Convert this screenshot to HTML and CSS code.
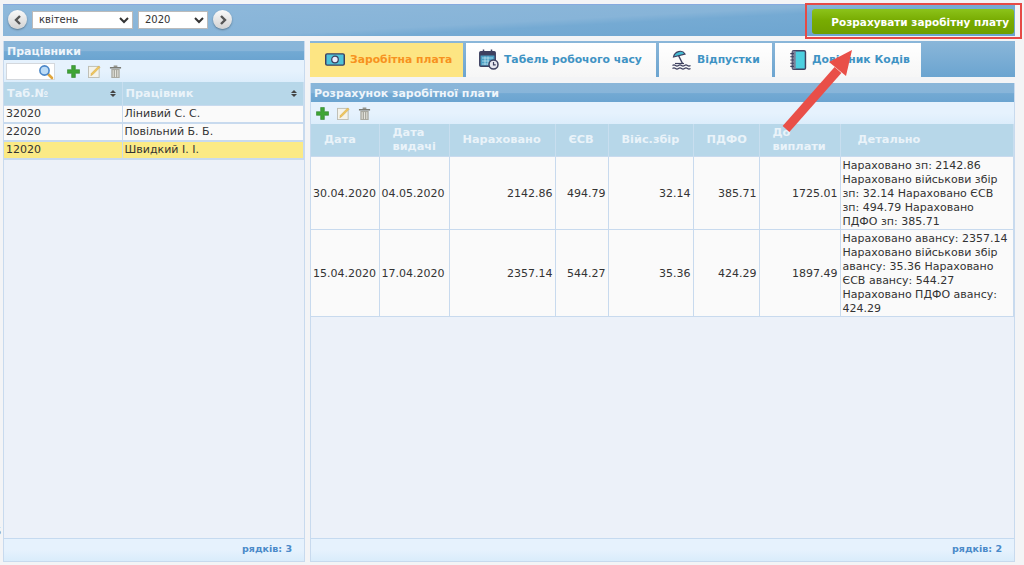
FILE: index.html
```html
<!DOCTYPE html>
<html>
<head>
  <meta charset="UTF-8">
  <title>Розрахунок заробітної плати</title>
  <link rel="stylesheet" href="styles.css">
</head>
<body>
  <div class="top-bar">
    <div class="period">
      <button class="round-button"><svg width="10" height="12" viewBox="0 0 10 12"><path d="M7 2 3 6l4 4" fill="none" stroke="#555" stroke-width="2.4"/></svg></button>
      <select class="month-select"><option>квітень</option></select>
      <select class="year-select"><option>2020</option></select>
      <button class="round-button"><svg width="10" height="12" viewBox="0 0 10 12"><path d="M3 2l4 4-4 4" fill="none" stroke="#555" stroke-width="2.4"/></svg></button>
    </div>
    <button class="calc-button">Розрахувати заробітну плату</button>
  </div>

  <div class="content">
    <div class="panel employees">
      <div class="panel-title">Працівники</div>
      <div class="toolbar">
        <div class="search-box">
          <svg width="16" height="16" viewBox="0 0 16 16"><path d="M9.500 9.500 14 14" stroke="#e0a63c" stroke-width="2.600" stroke-linecap="round"/><circle cx="6.500" cy="6.500" r="4.600" fill="#bcdcf7" stroke="#4a86c8" stroke-width="1.600"/></svg>
        </div>
        <svg class="tool-icon" width="13" height="13" viewBox="0 0 14 14"><path d="M5 .5h4v4.500h4.500v4H9v4.500H5V9H.5V5H5z" fill="#3fa535" stroke="#2a7d25" stroke-width=".6"/></svg>
        <svg class="tool-icon" width="13" height="13" viewBox="0 0 14 14"><rect x=".5" y="1.500" width="11.500" height="12" fill="#f4f3ea" stroke="#bdbdb2"/><path d="M3 11.500l.6-2.500L11.500 1l1.500 1.500L5 10.500z" fill="#efc65e" stroke="#c99a34" stroke-width=".4"/></svg>
        <svg class="tool-icon" width="13" height="13" viewBox="0 0 14 14"><path d="M1 2.200h12v1.600H1z" fill="#77776f"/><path d="M5 .5h4v1.700H5z" fill="#96968e"/><path d="M2.500 4.200h9V14h-9z" fill="#a9a9a0"/><path d="M4.500 5.500v7.500M7 5.500v7.500M9.500 5.500v7.500" stroke="#e8e8e2"/></svg>
      </div>
      <table class="grid staff-grid">
        <colgroup><col class="col-tab"><col></colgroup>
        <thead>
          <tr>
            <th><div class="sort-head">Таб.№<span class="sort-mark"></span></div></th>
            <th><div class="sort-head">Працівник<span class="sort-mark"></span></div></th>
          </tr>
        </thead>
        <tbody>
          <tr><td>32020</td><td>Лінивий С. С.</td></tr>
          <tr><td>22020</td><td>Повільний Б. Б.</td></tr>
          <tr class="selected"><td>12020</td><td>Швидкий І. І.</td></tr>
        </tbody>
      </table>
      <div class="panel-fill"></div>
      <div class="panel-footer">рядків: 3</div>
    </div>

    <div class="main">
      <div class="tabs">
        <div class="tab tab-pay active">
          <svg width="20" height="13" viewBox="0 0 22 14"><rect x=".8" y=".8" width="20.400" height="12.400" rx="1.500" fill="#4fc3d9" stroke="#3e4160" stroke-width="1.600"/><circle cx="11" cy="7" r="3.600" fill="#eef" stroke="#3e4160" stroke-width="1.400"/></svg>
          Заробітна плата
        </div>
        <div class="tab tab-time">
          <svg width="20" height="21" viewBox="0 0 20 21"><rect x=".8" y="2.800" width="15.400" height="14.400" rx="1" fill="#4a9fc4" stroke="#3e4160" stroke-width="1.500"/><path d="M1 3h15v3.500H1z" fill="#3e4160"/><path d="M4.500.5v4M12.500.5v4" stroke="#3e4160" stroke-width="1.500"/><path d="M3 9h11M3 12h7M3 15h6M6 7.500V16M9 7.500V16" stroke="#bfe3f0" stroke-width=".8"/><circle cx="14.500" cy="15.500" r="4.500" fill="#e8e8f0" stroke="#3e4160" stroke-width="1.500"/><path d="M14.500 13v2.800h2.200" fill="none" stroke="#3e4160" stroke-width="1.200"/></svg>
          Табель робочого часу
        </div>
        <div class="tab tab-leave">
          <svg width="20" height="21" viewBox="0 0 20 21"><path d="M1.500 8C2.500 2.500 10 0 13 5z" fill="#45bcd4" stroke="#3e4160" stroke-width="1.200"/><path d="M6.500 6.500 10.500 14.500" stroke="#3e4160" stroke-width="1.400"/><path d="M3 14.500h9" stroke="#3e4160" stroke-width="1.200"/><path d="M.5 16.500q1.500-1.200 3 0t3 0 3 0 3 0 3 0 3 0M.5 19.500q1.500-1.200 3 0t3 0 3 0 3 0 3 0 3 0" fill="none" stroke="#3e4160" stroke-width="1.200"/></svg>
          Відпустки
        </div>
        <div class="tab tab-codes">
          <svg width="18" height="20" viewBox="0 0 18 22"><rect x="2.800" y=".8" width="14.400" height="20.400" rx="1.500" fill="#4dcfe0" stroke="#3e4160" stroke-width="1.600"/><path d="M3 1h3.500v20H3z" fill="#7d8199"/><path d="M.5 4h4M.5 7.500h4M.5 11h4M.5 14.500h4M.5 18h4" stroke="#3e4160" stroke-width="1.200"/></svg>
          Довідник Кодів
        </div>
      </div>

      <div class="panel payroll">
        <div class="panel-title">Розрахунок заробітної плати</div>
        <div class="toolbar">
          <svg class="tool-icon" width="13" height="13" viewBox="0 0 14 14"><path d="M5 .5h4v4.500h4.500v4H9v4.500H5V9H.5V5H5z" fill="#3fa535" stroke="#2a7d25" stroke-width=".6"/></svg>
          <svg class="tool-icon" width="13" height="13" viewBox="0 0 14 14"><rect x=".5" y="1.500" width="11.500" height="12" fill="#f4f3ea" stroke="#bdbdb2"/><path d="M3 11.500l.6-2.500L11.500 1l1.500 1.500L5 10.500z" fill="#efc65e" stroke="#c99a34" stroke-width=".4"/></svg>
          <svg class="tool-icon" width="13" height="13" viewBox="0 0 14 14"><path d="M1 2.200h12v1.600H1z" fill="#77776f"/><path d="M5 .5h4v1.700H5z" fill="#96968e"/><path d="M2.500 4.200h9V14h-9z" fill="#a9a9a0"/><path d="M4.500 5.500v7.500M7 5.500v7.500M9.500 5.500v7.500" stroke="#e8e8e2"/></svg>
        </div>
        <table class="grid pay-grid">
          <colgroup>
            <col class="col-date-first"><col class="col-date"><col class="col-accrued"><col class="col-esv">
            <col class="col-mil"><col class="col-pdfo"><col class="col-net"><col>
          </colgroup>
          <thead>
            <tr>
              <th>Дата</th><th>Дата<br>видачі</th><th>Нараховано</th><th>ЄСВ</th>
              <th>Війс.збір</th><th>ПДФО</th><th>До<br>виплати</th><th class="th-detail">Детально</th>
            </tr>
          </thead>
          <tbody>
            <tr class="row-first">
              <td>30.04.2020</td><td>04.05.2020</td><td class="num">2142.86</td><td class="num">494.79</td>
              <td class="num">32.14</td><td class="num">385.71</td><td class="num">1725.01</td>
              <td>Нараховано зп: 2142.86 Нараховано військови збір зп: 32.14 Нараховано ЄСВ зп: 494.79 Нараховано ПДФО зп: 385.71</td>
            </tr>
            <tr class="row-second">
              <td>15.04.2020</td><td>17.04.2020</td><td class="num">2357.14</td><td class="num">544.27</td>
              <td class="num">35.36</td><td class="num">424.29</td><td class="num">1897.49</td>
              <td>Нараховано авансу: 2357.14 Нараховано військови збір авансу: 35.36 Нараховано ЄСВ авансу: 544.27 Нараховано ПДФО авансу: 424.29</td>
            </tr>
          </tbody>
        </table>
        <div class="panel-fill"></div>
        <div class="panel-footer">рядків: 2</div>
      </div>
    </div>
  </div>

  <!-- cut off at the window edge in the original -->
  <span class="edge-digit">5</span>

  <!-- red markup on top of the screenshot -->
  <div class="mark-box"></div>
  <svg class="mark-arrow" width="90" height="95" viewBox="0 0 90 95">
    <path d="M8 85 60 26" stroke="#e94f48" stroke-width="9"/>
    <path d="M74 6 68 32 51 18z" fill="#e94f48"/>
  </svg>
</body>
</html>
```

FILE: styles.css
```css
html, body {
  height: 100%;
}

body {
  margin: 0;
  padding: 4px 9px 3px 3px;
  box-sizing: border-box;
  height: 565px;
  overflow: hidden;
  display: flex;
  flex-direction: column;
  gap: 5px;
  position: relative;
  font-family: "DejaVu Sans", Verdana, sans-serif;
  font-size: 11px;
  color: #333;
  background-color: #f3f4f6;
}

.top-bar {
  height: 32px;
  flex: none;
  box-sizing: border-box;
  display: flex;
  justify-content: space-between;
  align-items: center;
  padding: 0 1px 0 5px;
  border-top: 1px solid #86a9de;
  background: linear-gradient(177deg, #8fb9db 0%, #87b4d8 52%, #75aad3 60%, #6aa3cf 100%);
}

.period {
  display: flex;
  align-items: center;
  gap: 5px;
  margin-top: -2px;
}

.round-button {
  width: 19px;
  height: 19px;
  padding: 0;
  border: none;
  border-radius: 50%;
  display: flex;
  align-items: center;
  justify-content: center;
  background: linear-gradient(#fafafa, #d2d2d2);
  box-shadow: 0 1px 2px rgba(0,0,0,0.35);
}

.month-select, .year-select {
  height: 18px;
  padding: 0 0 0 2px;
  border: 1px solid #bbb;
  background-color: #fff;
  font-family: "DejaVu Sans", Verdana, sans-serif;
  font-size: 10px;
  color: #333;
}

.month-select {
  width: 101px;
}

.year-select {
  width: 70px;
}

.calc-button {
  width: 202px;
  height: 25px;
  margin-top: 2px;
  padding: 0 5px 0 0;
  border: none;
  border-radius: 3px;
  text-align: right;
  font-family: "DejaVu Sans", Verdana, sans-serif;
  font-size: 10.5px;
  font-weight: bold;
  color: #fff;
  background: linear-gradient(#8cc31a, #78ac02 45%, #6f9f00);
}

.content {
  flex: 1;
  min-height: 0;
  display: flex;
  gap: 5px;
}

.panel {
  display: flex;
  flex-direction: column;
  box-sizing: border-box;
  border: 1px solid #c8daee;
  border-top: none;
  background-color: #ecf1f9;
}

.employees {
  width: 302px;
  flex: none;
}

.main {
  flex: 1;
  min-width: 0;
  display: flex;
  flex-direction: column;
  gap: 6px;
}

.payroll {
  flex: 1;
  min-height: 0;
}

.panel-title {
  height: 19px;
  flex: none;
  box-sizing: border-box;
  padding: 4px 0 0 3px;
  font-size: 11px;
  font-weight: bold;
  color: #eef5fb;
  background: linear-gradient(#8ab6d9 0%, #88b5d9 50%, #72a9d3 56%, #6ba4d0 100%);
}

.toolbar {
  height: 22px;
  flex: none;
  display: flex;
  align-items: center;
  gap: 8px;
  padding: 0 2px;
  background: linear-gradient(#e6f2fd, #e6f2fd 50%, #dcedfb 100%);
}

.payroll .toolbar {
  padding-left: 5px;
}

.search-box {
  width: 47px;
  height: 15px;
  margin-right: 4px;
  display: flex;
  justify-content: flex-end;
  border: 1px solid #d4d8dd;
  background-color: #fff;
}

.tool-icon {
  flex: none;
}

.grid {
  width: 100%;
  flex: none;
  border-collapse: collapse;
  table-layout: fixed;
  background-color: #fafafa;
}

.grid th {
  padding: 0;
  border-right: 1px solid #c8deef;
  font-size: 11.300px;
  font-weight: bold;
  line-height: 14px;
  color: #eaf3f9;
  background-color: #b7d7e9;
}

.grid td {
  border: 1px solid #c8daee;
  border-left: none;
  line-height: 14px;
  overflow: hidden;
}

.staff-grid th {
  height: 23px;
}

.staff-grid td {
  height: 16px;
  padding: 0 2px;
  border-bottom-width: 2px;
}

.sort-head {
  display: flex;
  justify-content: space-between;
  align-items: center;
  padding: 0 6px 0 3px;
  text-align: left;
}

.sort-mark {
  width: 0;
  height: 0;
  flex: none;
  position: relative;
  border-left: 3px solid transparent;
  border-right: 3px solid transparent;
  border-bottom: 3px solid #444;
  margin-bottom: 4px;
}

.sort-mark:after {
  content: "";
  position: absolute;
  left: -3px;
  top: 4px;
  border-left: 3px solid transparent;
  border-right: 3px solid transparent;
  border-top: 3px solid #444;
}

.selected td {
  background-color: #fbea85;
}

.col-tab {
  width: 118px;
}

.col-date-first {
  width: 68px;
}

.col-date {
  width: 70px;
}

.col-accrued {
  width: 106px;
}

.col-esv {
  width: 53px;
}

.col-mil {
  width: 85px;
}

.col-pdfo {
  width: 66px;
}

.col-net {
  width: 81px;
}

.pay-grid th {
  height: 32px;
  padding: 0 0 0 13px;
  text-align: left;
}

.pay-grid th.th-detail {
  padding-left: 17px;
}

.pay-grid td {
  padding: 1px 2px 0;
  text-align: left;
}

.pay-grid td.num {
  text-align: right;
}

.row-first td {
  height: 71px;
}

.row-second td {
  height: 85px;
}

.panel-fill {
  flex: 1;
}

.panel-footer {
  height: 23px;
  flex: none;
  box-sizing: border-box;
  padding: 4px 12px 0 0;
  border-top: 1px solid #c5daf0;
  text-align: right;
  font-size: 9.500px;
  font-weight: bold;
  color: #4a8ac9;
  background: linear-gradient(#e6f2fd, #e6f2fd 50%, #d9ecfb 100%);
}

.tabs {
  height: 36px;
  flex: none;
  display: flex;
  align-items: flex-end;
  gap: 3px;
  background: linear-gradient(#8ab6d9, #6ba4d0);
}

.tab {
  height: 34px;
  box-sizing: border-box;
  display: flex;
  align-items: center;
  gap: 5px;
  padding: 0 0 1px 13px;
  font-size: 10.800px;
  font-weight: bold;
  color: #3f93c4;
  background: linear-gradient(#fff, #f6f6f6);
}

.tab.active {
  color: #f7921e;
  background: #fde583;
}

.tab-pay {
  width: 153px;
  padding-left: 15px;
}

.tab-time {
  width: 190px;
}

.tab-leave {
  width: 113px;
}

.tab-codes {
  width: 146px;
  padding-left: 14px;
}

.edge-digit {
  position: absolute;
  left: -5px;
  top: 526px;
  font-size: 10px;
  color: #7a6a4a;
}

.mark-box {
  position: absolute;
  left: 805px;
  top: 3px;
  width: 213px;
  height: 32px;
  border: 2px solid #e64a46;
}

.mark-arrow {
  position: absolute;
  left: 778px;
  top: 44px;
}
```
